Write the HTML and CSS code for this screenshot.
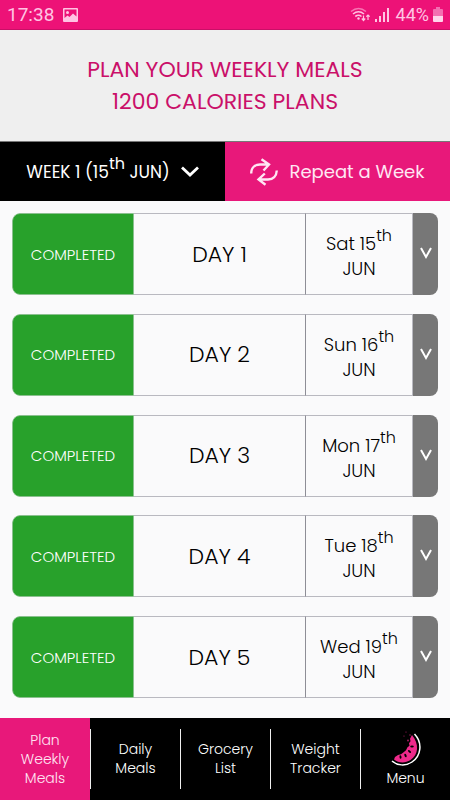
FILE: index.html
```html
<!DOCTYPE html>
<html lang="en">
<head>
<meta charset="utf-8">
<meta name="viewport" content="width=device-width, initial-scale=1">
<title>Weekly Meals</title>
<link rel="stylesheet" href="styles.css">
</head>
<body>
<div class="status">
  <span class="time">17:38</span>
  <svg class="photo" width="15" height="14" viewBox="0 0 15 14"><path fill="#ffc4e3" fill-rule="evenodd" d="M1 0h13a1 1 0 0 1 1 1v12a1 1 0 0 1-1 1H1a1 1 0 0 1-1-1V1a1 1 0 0 1 1-1zM1.500 1.500v8.500l3-2.500 2 1.500 3.500-3.500 3.500 3V1.500z"/><circle cx="4.500" cy="4.500" r="1.500" fill="#ffc4e3"/></svg>
  <svg class="wifi" width="21" height="16" viewBox="0 0 21 16" fill="none" stroke="#ffc4e3" stroke-width="1.600"><path opacity=".55" d="M1 4.500Q8.500-1.500 16 4.500"/><path d="M3 7Q8.500 2.500 14 7M5.300 9.500Q8.500 7 11.500 9.500"/><circle cx="8.500" cy="11.500" r="1.200" fill="#ffc4e3" stroke="none"/><path d="M13.500 8.500v4.500M11.800 11.500l1.700 2 1.700-2M18 13V8M16.300 9.700L18 8l1.700 1.700" stroke-width="1.200"/></svg>
  <svg class="signal" width="14" height="15" viewBox="0 0 14 15" fill="#ffc4e3"><path d="M0 12h2v3H0zM4 9h2v6H4zM8 5h2v10H8zM12 1h2v14h-2z"/></svg>
  <span class="percent">44%</span>
  <svg class="battery" width="10" height="15" viewBox="0 0 10 15"><path fill="#f36fb1" d="M3 0h4v2h2a1 1 0 0 1 1 1v6H0V3a1 1 0 0 1 1-1h2z"/><path fill="#ffd5eb" d="M0 9h10v5a1 1 0 0 1-1 1H1a1 1 0 0 1-1-1z"/></svg>
</div>
<header class="heading"><h1>PLAN YOUR WEEKLY MEALS<br>1200 CALORIES PLANS</h1></header>
<div class="actions">
  <button class="week" type="button" aria-haspopup="listbox">
    <span>WEEK 1 (15<sup>th</sup> JUN)</span>
    <svg width="18" height="11" viewBox="0 0 18 11" fill="none" stroke="#fff" stroke-width="2.800"><path d="M1 1.500l8 7.500 8-7.500"/></svg>
  </button>
  <button class="repeat" type="button">
    <svg width="28" height="28" viewBox="0 0 28 28" fill="none" stroke="#ffe6f3" stroke-width="2.400"><path d="M1.200 15.500C1.200 9.500 5 6.500 10 6.500h8M11.500 1.200l7.500 5.300-5.500 6"/><path d="M26.800 12.500C26.500 18 23 21.500 18 21.500h-8M14.800 15.500L8.500 21.500l7 5.300"/></svg>
    <span>Repeat a Week</span>
  </button>
</div>
<main class="days">
  <section class="day">
    <span class="state">COMPLETED</span><h2>DAY 1</h2><p>Sat 15<sup>th</sup><br>JUN</p>
    <button type="button" aria-label="Open day 1"><svg width="12" height="14" viewBox="0 0 12 14"><path d="M1 1l5 9 5-9"/></svg></button>
  </section>
  <section class="day">
    <span class="state">COMPLETED</span><h2>DAY 2</h2><p>Sun 16<sup>th</sup><br>JUN</p>
    <button type="button" aria-label="Open day 2"><svg width="12" height="14" viewBox="0 0 12 14"><path d="M1 1l5 9 5-9"/></svg></button>
  </section>
  <section class="day">
    <span class="state">COMPLETED</span><h2>DAY 3</h2><p>Mon 17<sup>th</sup><br>JUN</p>
    <button type="button" aria-label="Open day 3"><svg width="12" height="14" viewBox="0 0 12 14"><path d="M1 1l5 9 5-9"/></svg></button>
  </section>
  <section class="day">
    <span class="state">COMPLETED</span><h2>DAY 4</h2><p>Tue 18<sup>th</sup><br>JUN</p>
    <button type="button" aria-label="Open day 4"><svg width="12" height="14" viewBox="0 0 12 14"><path d="M1 1l5 9 5-9"/></svg></button>
  </section>
  <section class="day">
    <span class="state">COMPLETED</span><h2>DAY 5</h2><p>Wed 19<sup>th</sup><br>JUN</p>
    <button type="button" aria-label="Open day 5"><svg width="12" height="14" viewBox="0 0 12 14"><path d="M1 1l5 9 5-9"/></svg></button>
  </section>
</main>
<nav class="tabs">
  <a class="active" href="#plan" aria-current="page"><span>Plan<br>Weekly<br>Meals</span></a>
  <a href="#daily"><span>Daily<br>Meals</span></a>
  <a href="#grocery"><span>Grocery<br>List</span></a>
  <a href="#weight"><span>Weight<br>Tracker</span></a>
  <a href="#menu"><span class="menu"><svg width="30" height="36" viewBox="0 0 30 36">
    <path d="M23.500 3C32 12 30 25 21 31C14.500 35.500 6 34.500 1 30" fill="none" stroke="#fff" stroke-width="1.500"/>
    <path d="M21 4C28.500 13 27.500 24 19.500 29C14 32.500 7.500 32 3 28.500L4 26l3-2 3-.8 2-1.500 3-2.500 1.500-3 2-1.500-.5-2.500 1.500-2-.5-2.500z" fill="#ee2a8b"/>
    <g fill="#000"><ellipse cx="9.500" cy="26" rx="1" ry="1.800" transform="rotate(-10 9.500 26)"/><ellipse cx="14.500" cy="24.500" rx="1" ry="1.800" transform="rotate(-25 14.500 24.500)"/><ellipse cx="18.500" cy="20.500" rx="1" ry="1.800" transform="rotate(-50 18.500 20.500)"/><ellipse cx="21" cy="15.500" rx="1.800" ry="1"/></g>
    <g fill="#b11c66"><circle cx="15" cy="1" r=".6"/><circle cx="19" cy="4" r=".7"/><circle cx="13" cy="5" r=".6"/><circle cx="17" cy="9.500" r=".9"/></g>
  </svg>Menu</span></a>
</nav>
</body>
</html>
```
FILE: styles.css
```css
* { box-sizing: border-box; }
body {
  margin: 0;
  min-height: 100vh;
  display: flex;
  flex-direction: column;
  background: #fafafb;
  color: #000;
  font-family: Poppins, Inter, "Liberation Sans", sans-serif;
  font-weight: 300;
}
h1, h2, p { margin: 0; font-weight: inherit; }
svg { display: block; flex: none; }
button { font: inherit; border: 0; padding: 0; cursor: pointer; }
sup { vertical-align: 9px; font-size: 16px; line-height: 0; }

.status {
  height: 30px;
  display: flex;
  align-items: center;
  padding: 0 7px;
  background: #ed1277;
  border-bottom: 1px solid #c90f67;
  color: #ffc4e3;
  font: 400 19px/30px Roboto, sans-serif;
}
.photo { margin-left: 9px; }
.wifi { margin-left: auto; }
.signal { margin-left: 4px; }
.percent { margin: 0 4px 0 7px; font-size: 18px; }

.heading {
  padding: 24px 12px 23px;
  background: #efefef;
  color: #ca1069;
  text-align: center;
}
.heading h1 { font-size: 22px; font-weight: 400; line-height: 32px; }

.actions { display: flex; height: 60px; border-top: 1px solid #777; }
.actions button {
  flex: 1;
  display: flex;
  align-items: center;
  justify-content: center;
  gap: 11px;
  font-size: 18px;
  font-weight: 400;
  white-space: nowrap;
}
.actions .week { background: #000; color: #fff; font-size: 17px; }
.actions .repeat { background: #e8187a; color: #ffe6f3; }

.days {
  flex: 1;
  display: flex;
  flex-direction: column;
  justify-content: space-between;
  gap: 12px;
  padding: 12px 12px 20px;
}
.day {
  height: 82px;
  display: grid;
  grid-template-columns: 122fr 171fr 108fr 25px;
  border-radius: 8px;
  overflow: hidden;
  text-align: center;
}
.day > * { display: flex; align-items: center; justify-content: center; }
.state { background: #28a12b; color: #fff; font-size: 15px; border: 1px solid #8bc08f; border-radius: 8px 0 0 8px; }
.day h2 { font-size: 22px; border: solid #b9b9c0; border-width: 1px 0; }
.day p { display: block; padding-top: 17px; font-size: 18px; line-height: 25px; border: 1px solid #b9b9c0; border-left-color: #8e8e96; }
.day button { background: #777; }
.day button svg { fill: none; stroke: #fff; stroke-width: 2; }

.tabs { display: grid; grid-template-columns: repeat(5, 1fr); height: 82px; background: #000; }
.tabs a {
  display: flex;
  align-items: center;
  color: #fff;
  font-size: 14px;
  line-height: 19px;
  text-align: center;
  text-decoration: none;
}
.tabs span { flex: 1; }
.tabs a + a::before { content: ""; width: 1px; height: 60px; background: #eee; }
.tabs .active { background: #e8187a; color: #ffe6f3; }
.menu svg { margin: 0 auto 2px; }
```
